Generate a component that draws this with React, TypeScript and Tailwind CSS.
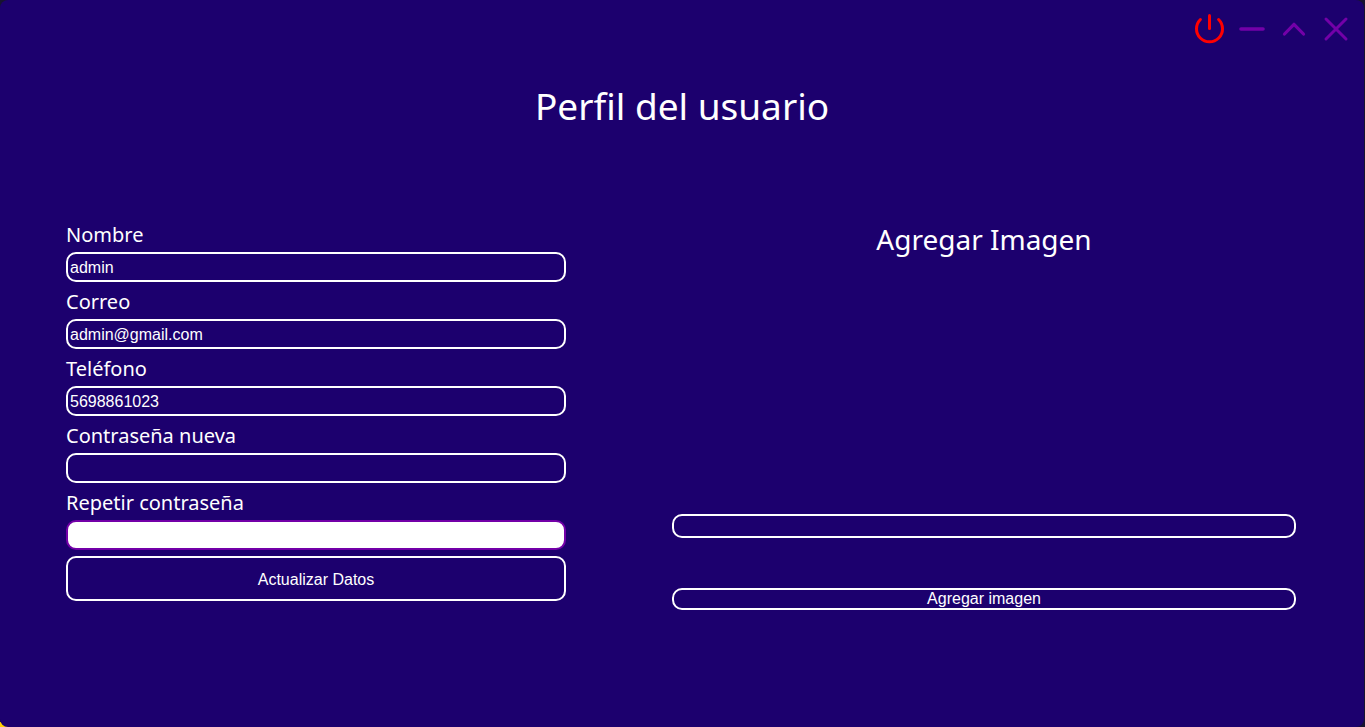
import { useState } from "react";

type Field = { id: string; label: string; type: string; value: string };

const initialFields: Field[] = [
  { id: "nombre", label: "Nombre", type: "text", value: "admin" },
  { id: "correo", label: "Correo", type: "email", value: "admin@gmail.com" },
  { id: "telefono", label: "Teléfono", type: "tel", value: "5698861023" },
  { id: "nueva", label: "Contraseña nueva", type: "password", value: "" },
  { id: "repetir", label: "Repetir contraseña", type: "password", value: "" },
];

const outline = "border-2 border-white text-white";
const active = "border-[#7300a8] bg-white text-[#1c006e]";

function WindowControls() {
  return (
    <div className="flex h-14 items-center justify-end gap-2 pt-0.5 pr-[11px]">
      <button type="button" aria-label="Cerrar sesión" className="text-[#ff0000]">
        <svg width="34" height="34" viewBox="0 0 34 34" fill="none" stroke="currentColor" strokeWidth="3" strokeLinecap="round">
          <path d="M16.500 3.500v13" />
          <path d="M7.400 7.500a13 13 0 1 0 18.200 0" />
        </svg>
      </button>
      <button type="button" aria-label="Minimizar" className="text-[#7300a8]">
        <svg width="34" height="34" viewBox="0 0 34 34" fill="none" stroke="currentColor" strokeWidth="3.600" strokeLinecap="round">
          <path d="M6 17h22" />
        </svg>
      </button>
      <button type="button" aria-label="Maximizar" className="text-[#7300a8]">
        <svg width="34" height="34" viewBox="0 0 34 34" fill="none" stroke="currentColor" strokeWidth="3.2" strokeLinecap="round" strokeLinejoin="round">
          <path d="M7.500 22l9.500-9.700 9.500 9.700" />
        </svg>
      </button>
      <button type="button" aria-label="Cerrar" className="text-[#7300a8]">
        <svg width="34" height="34" viewBox="0 0 34 34" fill="none" stroke="currentColor" strokeWidth="3" strokeLinecap="round">
          <path d="M7 7l20 20M27 7l-20 20" />
        </svg>
      </button>
    </div>
  );
}

export default function App() {
  const [fields, setFields] = useState(initialFields);
  const update = (id: string, value: string) =>
    setFields(fields.map((f) => (f.id === id ? { ...f, value } : f)));

  return (
    <div className="min-h-screen bg-[#17132f] bg-[linear-gradient(to_top_right,#ffd000_5px,#17132f_5px)] pr-px font-['Liberation_Sans',Arial,sans-serif] text-base">
      <main className="min-h-screen rounded-lg bg-[#1c006e] text-white">
        <WindowControls />
        <h1 className="pt-5 text-center font-['Noto_Sans',Tahoma,sans-serif] text-[37px] leading-[60px]">
          Perfil del usuario
        </h1>
        <div className="grid grid-cols-[500fr_624fr] gap-[106px] pt-[79px] pr-[68px] pl-[66px]">
          <form onSubmit={(e) => e.preventDefault()}>
            {fields.map((f) => (
              <div key={f.id} className="flex flex-col">
                <label htmlFor={f.id} className="pt-0.5 font-['Noto_Sans',Tahoma,sans-serif] text-xl leading-[35px]">
                  {f.label}
                </label>
                <input
                  id={f.id}
                  type={f.type}
                  value={f.value}
                  onChange={(e) => update(f.id, e.target.value)}
                  className={`h-[30px] rounded-[10px] border-2 px-0.5 pt-0.5 outline-none ${f.id === "repetir" ? active : outline}`}
                />
              </div>
            ))}
            <button type="submit" className={`mt-1.5 h-[45px] w-full rounded-[10px] pt-0.5 ${outline}`}>
              Actualizar Datos
            </button>
          </form>
          <section className="flex flex-col">
            <h2 className="pt-1 text-center font-['Noto_Sans',Tahoma,sans-serif] text-[28px] leading-[40px]">
              Agregar Imagen
            </h2>
            <input aria-label="Ruta de la imagen" className={`mt-[255px] h-6 rounded-[10px] px-0.5 outline-none ${outline}`} />
            <button type="button" className={`mt-[50px] h-[22px] rounded-[10px] leading-[18px] ${outline}`}>
              Agregar imagen
            </button>
          </section>
        </div>
      </main>
    </div>
  );
}
